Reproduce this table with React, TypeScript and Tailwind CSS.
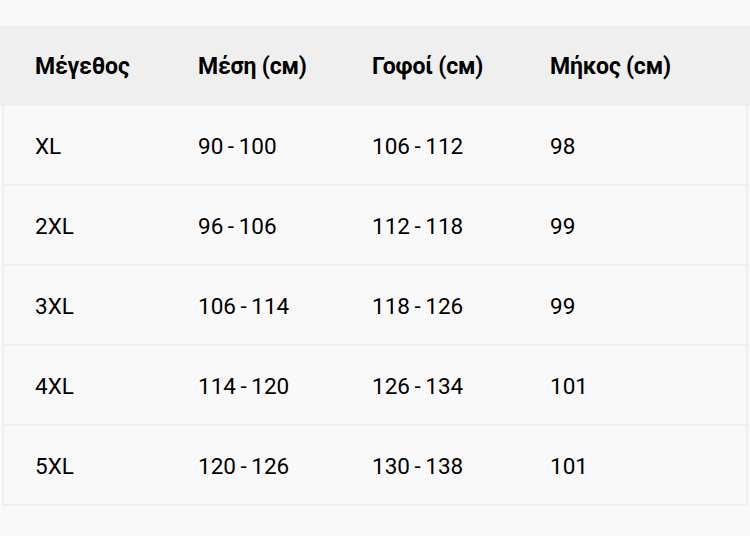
const rows = [
  ["XL", "90 - 100", "106 - 112", "98"],
  ["2XL", "96 - 106", "112 - 118", "99"],
  ["3XL", "106 - 114", "118 - 126", "99"],
  ["4XL", "114 - 120", "126 - 134", "101"],
  ["5XL", "120 - 126", "130 - 138", "101"],
]

const headers = ["Μέγεθος", "Μέση (см)", "Γοφοί (см)", "Μήκος (см)"]

const cols = "grid grid-cols-[163px_174px_178px_1fr]"

export default function App() {
  return (
    <div className="min-h-[536px] w-[750px] bg-[#f9f9f9] pt-[26px] font-['Roboto',sans-serif] text-black">
      <div className={`${cols} h-[80px] items-center bg-[#efefef] pt-[3px]`}>
        {headers.map((h) => (
          <div key={h} className="pl-[35px] text-[23px] font-bold tracking-[-0.2px]">
            {h}
          </div>
        ))}
      </div>
      <div className="mx-[2px] border-x-2 border-[#efefef]">
        {rows.map((r) => (
          <div key={r[0]} className={`${cols} h-[80px] items-center border-b-2 border-[#efefef] pt-[3px]`}>
            {r.map((c, i) => (
              <div key={i} className="pl-[31px] text-[22.5px] [word-spacing:-1px]">
                {c}
              </div>
            ))}
          </div>
        ))}
      </div>
    </div>
  )
}
